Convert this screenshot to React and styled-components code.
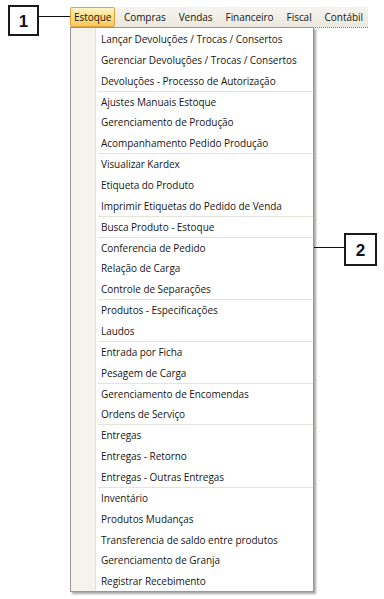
import React from "react";
import styled, { createGlobalStyle } from "styled-components";

const Global = createGlobalStyle`
  html, body { margin: 0; padding: 0; background: #ffffff; }
  body { font-family: "Open Sans", "Noto Sans", sans-serif; }
`;

const Page = styled.div`
  position: relative;
  width: 384px;
  height: 599px;
  overflow: hidden;
  padding: 7px 0 0 70px;
  box-sizing: border-box;
`;

const MenuBar = styled.div`
  position: relative;
  display: flex;
  align-items: stretch;
  width: 298px;
  height: 20px;
  background: linear-gradient(#f6f4ef, #ebe8de);
  border-bottom: 1px dotted #7d7d7d;
  font-size: 10px;
  letter-spacing: -0.05px;
  color: #161616;
`;

const BarItem = styled.div`
  display: flex;
  align-items: center;
  padding: 0 ${(p) => (p.$active ? "3px" : "5.5px")};
  margin-right: ${(p) => (p.$active ? "2px" : "0")};
  box-sizing: border-box;
  border: 1px solid ${(p) => (p.$active ? "#e0a23c" : "transparent")};
  border-radius: 2px;
  background: ${(p) =>
    p.$active ? "linear-gradient(#fff3c6 0%, #fde08c 45%, #f9c95a 100%)" : "transparent"};
  white-space: nowrap;
`;

const Dropdown = styled.div`
  position: absolute;
  left: 0;
  top: 20px;
  width: 244px;
  height: 565px;
  box-sizing: border-box;
  background: #ffffff;
  border: 1px solid #979797;
  box-shadow: 2px 2px 2px rgba(0, 0, 0, 0.35);
  display: flex;
  z-index: 2;
`;

const Gutter = styled.div`
  width: 24px;
  flex: none;
  background: #f5f3ec;
  border-right: 1px solid #e4e1d8;
  box-shadow: 1px 0 0 #ffffff;
`;

const Items = styled.div`
  flex: 1;
  display: flex;
  flex-direction: column;
  padding-left: 2px;
`;

const Item = styled.div`
  height: 20.9px;
  display: flex;
  align-items: center;
  padding-left: 3px;
  box-sizing: border-box;
  font-size: 10px;
  letter-spacing: -0.05px;
  color: #161616;
  white-space: nowrap;
  border-top: 1px solid ${(p) => (p.$sep ? "#e6e3da" : "transparent")};
`;

const Callout = styled.div`
  position: absolute;
  left: ${(p) => p.$x}px;
  top: ${(p) => p.$y}px;
  display: flex;
  flex-direction: ${(p) => (p.$reverse ? "row-reverse" : "row")};
  align-items: flex-start;
`;

const NumberBox = styled.div`
  width: ${(p) => p.$w}px;
  height: ${(p) => p.$h}px;
  box-sizing: border-box;
  border: 2px solid #1a1a1a;
  background: #ffffff;
  display: flex;
  align-items: center;
  justify-content: center;
  font-family: "Liberation Sans", Arial, sans-serif;
  font-weight: bold;
  font-size: 17px;
  color: #111;
  padding-top: 2px;
`;

const Leader = styled.div`
  width: ${(p) => p.$w}px;
  height: 1.5px;
  margin-top: ${(p) => p.$offset}px;
  background: #111;
`;

const bar = ["Estoque", "Compras", "Vendas", "Financeiro", "Fiscal", "Contábil"];

const groups = [
  ["Lançar Devoluções / Trocas / Consertos", "Gerenciar Devoluções / Trocas / Consertos", "Devoluções - Processo de Autorização"],
  ["Ajustes Manuais Estoque", "Gerenciamento de Produção", "Acompanhamento Pedido Produção"],
  ["Visualizar Kardex", "Etiqueta do Produto", "Imprimir Etiquetas do Pedido de Venda"],
  ["Busca Produto - Estoque"],
  ["Conferencia de Pedido", "Relação de Carga", "Controle de Separações"],
  ["Produtos - Especificações", "Laudos"],
  ["Entrada por Ficha", "Pesagem de Carga"],
  ["Gerenciamento de Encomendas", "Ordens de Serviço"],
  ["Entregas", "Entregas - Retorno", "Entregas - Outras Entregas"],
  ["Inventário", "Produtos Mudanças", "Transferencia de saldo entre produtos", "Gerenciamento de Granja", "Registrar Recebimento"],
];

export default function App() {
  return (
    <>
      <Global />
      <Page>
        <MenuBar>
          {bar.map((b, i) => (
            <BarItem key={b} $active={i === 0}>
              {b}
            </BarItem>
          ))}
          <Dropdown>
            <Gutter />
            <Items>
              {groups.map((g, gi) =>
                g.map((t, ti) => (
                  <Item key={t} $sep={gi > 0 && ti === 0}>
                    {t}
                  </Item>
                ))
              )}
            </Items>
          </Dropdown>
        </MenuBar>
        <Callout $x={8} $y={5}>
          <NumberBox $w={31} $h={31}>1</NumberBox>
          <Leader $w={31} $offset={10.5} />
        </Callout>
        <Callout $x={288} $y={233} $reverse>
          <NumberBox $w={33} $h={33}>2</NumberBox>
          <Leader $w={56} $offset={13.5} />
        </Callout>
      </Page>
    </>
  );
}
